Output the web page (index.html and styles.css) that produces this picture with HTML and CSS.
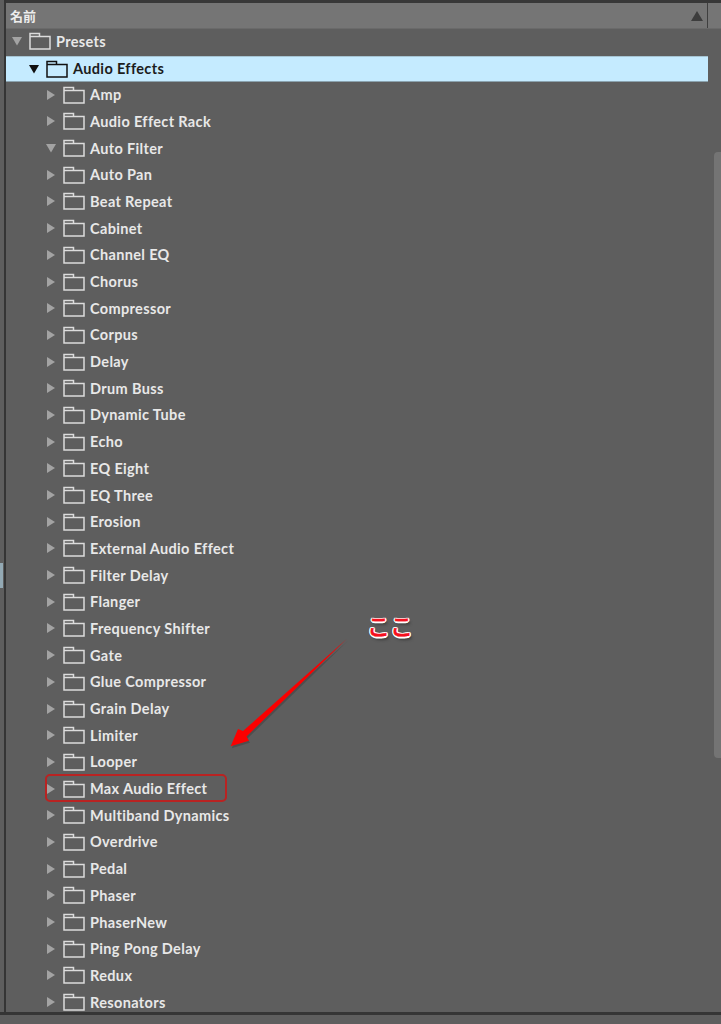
FILE: index.html
```html
<!DOCTYPE html>
<html lang="ja">
<head>
<meta charset="utf-8">
<title>Presets</title>
<link rel="stylesheet" href="styles.css">
</head>
<body>
<svg class="defs" width="0" height="0" aria-hidden="true">
  <symbol id="folder" viewBox="0 0 22 18"><path d="M1 17V1.5h9.5V4.5H21V17Z M1 4.5h9.5" fill="none" stroke="currentColor" stroke-width="1.5"/></symbol>
  <symbol id="tri-r" viewBox="0 0 10 12"><path d="M1 1l8 5-8 5Z" fill="currentColor"/></symbol>
  <symbol id="tri-d" viewBox="0 0 12 10"><path d="M1 1h10L6 9.5Z" fill="currentColor"/></symbol>
</svg>
<div class="app">
  <div class="side"><span class="side-mark"></span></div>
  <main class="panel">
    <header class="head">
      <span class="head-title">名前</span>
      <svg class="sort" viewBox="0 0 12 10"><path d="M6 0l6 10H0Z" fill="currentColor"/></svg>
      <span class="head-cap"></span>
    </header>
    <ul class="tree" id="tree">
      <li class="row d0"><svg class="tw"><use href="#tri-d"/></svg><svg class="fd"><use href="#folder"/></svg><span>Presets</span></li>
      <li class="row d1 sel"><svg class="tw"><use href="#tri-d"/></svg><svg class="fd"><use href="#folder"/></svg><span>Audio Effects</span></li>
      <li class="row d2"><svg class="tr"><use href="#tri-r"/></svg><svg class="fd"><use href="#folder"/></svg><span>Amp</span></li>
      <li class="row d2"><svg class="tr"><use href="#tri-r"/></svg><svg class="fd"><use href="#folder"/></svg><span>Audio Effect Rack</span></li>
      <li class="row d2"><svg class="tw"><use href="#tri-d"/></svg><svg class="fd"><use href="#folder"/></svg><span>Auto Filter</span></li>
      <li class="row d2"><svg class="tr"><use href="#tri-r"/></svg><svg class="fd"><use href="#folder"/></svg><span>Auto Pan</span></li>
      <li class="row d2"><svg class="tr"><use href="#tri-r"/></svg><svg class="fd"><use href="#folder"/></svg><span>Beat Repeat</span></li>
      <li class="row d2"><svg class="tr"><use href="#tri-r"/></svg><svg class="fd"><use href="#folder"/></svg><span>Cabinet</span></li>
      <li class="row d2"><svg class="tr"><use href="#tri-r"/></svg><svg class="fd"><use href="#folder"/></svg><span>Channel EQ</span></li>
      <li class="row d2"><svg class="tr"><use href="#tri-r"/></svg><svg class="fd"><use href="#folder"/></svg><span>Chorus</span></li>
      <li class="row d2"><svg class="tr"><use href="#tri-r"/></svg><svg class="fd"><use href="#folder"/></svg><span>Compressor</span></li>
      <li class="row d2"><svg class="tr"><use href="#tri-r"/></svg><svg class="fd"><use href="#folder"/></svg><span>Corpus</span></li>
      <li class="row d2"><svg class="tr"><use href="#tri-r"/></svg><svg class="fd"><use href="#folder"/></svg><span>Delay</span></li>
      <li class="row d2"><svg class="tr"><use href="#tri-r"/></svg><svg class="fd"><use href="#folder"/></svg><span>Drum Buss</span></li>
      <li class="row d2"><svg class="tr"><use href="#tri-r"/></svg><svg class="fd"><use href="#folder"/></svg><span>Dynamic Tube</span></li>
      <li class="row d2"><svg class="tr"><use href="#tri-r"/></svg><svg class="fd"><use href="#folder"/></svg><span>Echo</span></li>
      <li class="row d2"><svg class="tr"><use href="#tri-r"/></svg><svg class="fd"><use href="#folder"/></svg><span>EQ Eight</span></li>
      <li class="row d2"><svg class="tr"><use href="#tri-r"/></svg><svg class="fd"><use href="#folder"/></svg><span>EQ Three</span></li>
      <li class="row d2"><svg class="tr"><use href="#tri-r"/></svg><svg class="fd"><use href="#folder"/></svg><span>Erosion</span></li>
      <li class="row d2"><svg class="tr"><use href="#tri-r"/></svg><svg class="fd"><use href="#folder"/></svg><span>External Audio Effect</span></li>
      <li class="row d2"><svg class="tr"><use href="#tri-r"/></svg><svg class="fd"><use href="#folder"/></svg><span>Filter Delay</span></li>
      <li class="row d2"><svg class="tr"><use href="#tri-r"/></svg><svg class="fd"><use href="#folder"/></svg><span>Flanger</span></li>
      <li class="row d2"><svg class="tr"><use href="#tri-r"/></svg><svg class="fd"><use href="#folder"/></svg><span>Frequency Shifter</span></li>
      <li class="row d2"><svg class="tr"><use href="#tri-r"/></svg><svg class="fd"><use href="#folder"/></svg><span>Gate</span></li>
      <li class="row d2"><svg class="tr"><use href="#tri-r"/></svg><svg class="fd"><use href="#folder"/></svg><span>Glue Compressor</span></li>
      <li class="row d2"><svg class="tr"><use href="#tri-r"/></svg><svg class="fd"><use href="#folder"/></svg><span>Grain Delay</span></li>
      <li class="row d2"><svg class="tr"><use href="#tri-r"/></svg><svg class="fd"><use href="#folder"/></svg><span>Limiter</span></li>
      <li class="row d2"><svg class="tr"><use href="#tri-r"/></svg><svg class="fd"><use href="#folder"/></svg><span>Looper</span></li>
      <li class="row d2"><svg class="tr"><use href="#tri-r"/></svg><svg class="fd"><use href="#folder"/></svg><span>Max Audio Effect</span></li>
      <li class="row d2"><svg class="tr"><use href="#tri-r"/></svg><svg class="fd"><use href="#folder"/></svg><span>Multiband Dynamics</span></li>
      <li class="row d2"><svg class="tr"><use href="#tri-r"/></svg><svg class="fd"><use href="#folder"/></svg><span>Overdrive</span></li>
      <li class="row d2"><svg class="tr"><use href="#tri-r"/></svg><svg class="fd"><use href="#folder"/></svg><span>Pedal</span></li>
      <li class="row d2"><svg class="tr"><use href="#tri-r"/></svg><svg class="fd"><use href="#folder"/></svg><span>Phaser</span></li>
      <li class="row d2"><svg class="tr"><use href="#tri-r"/></svg><svg class="fd"><use href="#folder"/></svg><span>PhaserNew</span></li>
      <li class="row d2"><svg class="tr"><use href="#tri-r"/></svg><svg class="fd"><use href="#folder"/></svg><span>Ping Pong Delay</span></li>
      <li class="row d2"><svg class="tr"><use href="#tri-r"/></svg><svg class="fd"><use href="#folder"/></svg><span>Redux</span></li>
      <li class="row d2"><svg class="tr"><use href="#tri-r"/></svg><svg class="fd"><use href="#folder"/></svg><span>Resonators</span></li>
    </ul>
    <div class="scroll-thumb"></div>
  </main>
  <div class="foot"></div>
  <div class="callout-box"></div>
  <span class="callout-text">ここ</span>
  <svg class="callout-arrow" viewBox="0 0 721 1024">
    <path class="arrow-shadow" d="M346.7 639 243 731 238 729 230.7 746.3 249 740.7 246.5 736.5Z"/>
    <path class="arrow-fill" d="M346.7 639 243 731 238 729 230.7 746.3 249 740.7 246.5 736.5Z"/>
  </svg>
</div>
</body>
</html>
```
FILE: styles.css
```css
* { box-sizing: border-box; }
html, body { margin: 0; padding: 0; }
body {
  width: 721px;
  height: 1024px;
  overflow: hidden;
  background: #5e5e5e;
  font-family: "Lato", "Noto Sans CJK JP", sans-serif;
}
.defs { position: absolute; }
.app {
  position: relative;
  display: grid;
  grid-template-columns: 6px 1fr;
  grid-template-rows: 1012px 1fr;
  height: 1024px;
  background: #5e5e5e;
}
.side {
  position: relative;
  border-right: 2px solid #353535;
  background: #5e5e5e;
}
.side-mark {
  position: absolute;
  left: 0;
  top: 563px;
  width: 3px;
  height: 25px;
  background: #93a9b4;
}
.panel {
  position: relative;
  overflow: hidden;
  border-top: 3px solid #383838;
  background: #5e5e5e;
}
.foot {
  grid-column: 1 / -1;
  border-top: 3px solid #353535;
  background: #5e5e5e;
}
.head {
  display: flex;
  align-items: center;
  height: 26px;
  background: #757575;
  border-bottom: 1px solid #6a6a6a;
  color: #ececec;
}
.head-title {
  flex: 1;
  padding-left: 4px;
  padding-bottom: 1px;
  font-size: 13px;
  font-weight: 700;
}
.sort {
  width: 12px;
  height: 10px;
  margin-right: 4px;
  color: #3d3d3d;
}
.head-cap {
  width: 14px;
  height: 100%;
  border-left: 1px solid #3f3f3f;
}
.tree {
  list-style: none;
  margin: 0;
  padding: 0;
}
.row {
  display: flex;
  align-items: center;
  height: 26.7px;
  padding-bottom: 2px;
  color: #e8e8e8;
  font-size: 14.5px;
  font-weight: 700;
  letter-spacing: 0.35px;
}
.d0 { padding-left: 5px; }
.d1 { padding-left: 22px; }
.d2 { padding-left: 39px; }
.tw, .tr { flex: none; color: #a3a3a3; }
.tw { width: 12px; height: 10px; margin-right: 6px; }
.tr { width: 10px; height: 12px; margin-left: 1px; margin-right: 7px; }
.fd { flex: none; width: 22px; height: 18px; margin-right: 5px; color: #dcdcdc; }
.sel {
  width: 702px;
  height: 26.7px;
  background: #c5ebff;
  border-top: 1px solid #a6c4d2;
  border-bottom: 1px solid #8ba3af;
  padding-bottom: 1px;
  color: #1c1c1c;
}
.sel .tw { color: #101010; }
.sel .fd { color: #111; }
.scroll-thumb {
  position: absolute;
  right: 0;
  top: 149px;
  width: 7px;
  height: 606px;
  background: #747474;
  border-radius: 4px 0 0 4px;
}
.callout-box {
  position: absolute;
  left: 45px;
  top: 774px;
  width: 182px;
  height: 28px;
  border: 2px solid #b92322;
  border-radius: 5px;
}
.callout-text {
  position: absolute;
  left: 367px;
  top: 610px;
  font-family: "Noto Sans CJK JP", sans-serif;
  font-size: 23px;
  line-height: 30px;
  font-weight: 500;
  color: #f5101e;
  -webkit-text-stroke: 0.4px #f5101e;
  text-shadow: 1.5px 0 0 #fff, -1.5px 0 0 #fff, 0 1.5px 0 #fff, 0 -1.5px 0 #fff, 1px 1px 0 #fff, -1px -1px 0 #fff, 1px -1px 0 #fff, -1px 1px 0 #fff, 2px 3px 3px #333;
}
.callout-arrow {
  position: absolute;
  left: 0;
  top: 0;
  width: 721px;
  height: 1024px;
  pointer-events: none;
}
.arrow-fill { fill: #fb0000; }
.arrow-shadow { fill: #000; opacity: 0.16; transform: translate(1px, 2px); }
```
